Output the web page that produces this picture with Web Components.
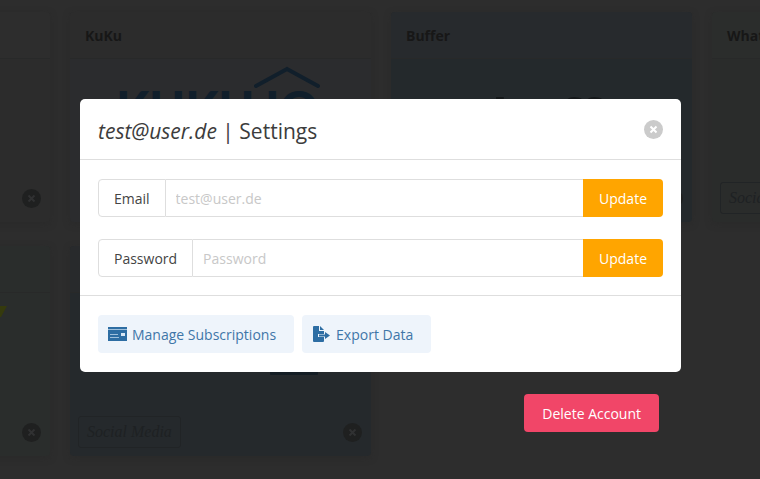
<!DOCTYPE html>
<html lang="en">
<head>
<meta charset="utf-8">
<title>Settings</title>
<style>
html, body { margin: 0; height: 100%; overflow: hidden; background: #2d2d2d; font-family: "Open Sans", "Noto Sans", sans-serif; font-size: 14px; color: #444; }
</style>
</head>
<body>
<app-shell>
  <card-board>
    <app-card style="--bg:#2c2c2c;--head:#2d2d2d"></app-card>
    <app-card name="KuKu" style="--bg:#2b2c2e;--head:#2c2c2c"><kuku-logo></kuku-logo></app-card>
    <app-card name="Buffer" style="--bg:#24292c;--head:#272a2d"><buffer-logo></buffer-logo></app-card>
    <app-card name="WhatsApp" tag="Social" style="--bg:#2a2c2b;--head:#2b2d2c"></app-card>
    <app-card style="--bg:#2a2d2c;--head:#2a2d2c"><leaf-logo></leaf-logo></app-card>
    <app-card tag="Social Media" style="--bg:#25292c;--head:#282a2c"><line-logo></line-logo></app-card>
  </card-board>
  <settings-dialog slot="overlay" user="test@user.de">
    <update-field label="Email" type="email" placeholder="test@user.de"></update-field>
    <update-field label="Password" type="password" placeholder="Password"></update-field>
    <action-button slot="actions" kind="soft">
      <svg slot="icon" width="19" height="16" viewBox="0 0 19 16" aria-hidden="true"><path fill="#2d6da3" d="M0 1h19v2H0zM0 4h19v11H0z"/><path fill="#9fc0dc" d="M0 3h19v1H0zM2 8h8v1H2zM2 11h9v1H2z"/><path fill="#d8e7f4" d="M13 7h4v3h-4z"/></svg>
      Manage Subscriptions
    </action-button>
    <action-button slot="actions" kind="soft">
      <svg slot="icon" width="19" height="16" viewBox="-1 0 19 16" aria-hidden="true"><path fill="#2d6da3" d="M1 0h5v5h5v3H5v3h6v4q0 1-1 1H1q-1 0-1-1V1q0-1 1-1zM7 0l4 4H7zM12 6l5 3.500-5 3.500v-2.500H6v-2h6z"/></svg>
      Export Data
    </action-button>
    <action-button slot="after" kind="danger">Delete Account</action-button>
  </settings-dialog>
</app-shell>
<script>
function define(name, render) {
  customElements.define(name, class extends HTMLElement {
    constructor() {
      super();
      this.attachShadow({ mode: "open" });
    }
    connectedCallback() {
      const t = document.createElement("template");
      t.innerHTML = render(this);
      this.shadowRoot.replaceChildren(t.content.cloneNode(true));
    }
  });
}

const closeIcon = (fill, cross) => `<svg width="19" height="19" viewBox="0 0 19 19" aria-hidden="true"><circle cx="9.5" cy="9.5" r="9.500" fill="${fill}"/><path d="M6.500 6.500l6 6M12.500 6.500l-6 6" stroke="${cross}" stroke-width="2"/></svg>`;

define("app-shell", () => `
<style>
:host { display: grid; height: 100vh; grid-template: minmax(0, 1fr) / minmax(0, 1fr); overflow: hidden; }
main, aside { grid-area: 1 / 1; min-width: 0; }
main { overflow: hidden; }
aside { z-index: 1; }
</style>
<main inert><slot></slot></main><aside><slot name="overlay"></slot></aside>`);

define("card-board", () => `
<style>
:host { display: grid; grid-template-columns: repeat(4, 301px); grid-auto-rows: 210px; gap: 24px 20px; margin: 12px 0 0 -251px; }
</style><slot></slot>`);

define("app-card", el => `
<style>
:host { display: flex; flex-direction: column; border-radius: 4px; background: var(--bg); box-shadow: 0 2px 6px #2a2a2a; overflow: hidden; color: #171717; }
header { height: 47px; box-sizing: border-box; padding: 1px 15px 0; display: flex; align-items: center; background: var(--head); border-bottom: 1px solid #282929; }
h2 { margin: 0; font-size: 14px; line-height: 20px; font-weight: 700; }
.art { flex: 1; min-height: 0; overflow: hidden; display: flex; flex-direction: column; align-items: center; }
footer { height: 48px; box-sizing: border-box; padding: 0 9px 0 8px; display: flex; align-items: center; justify-content: space-between; }
.tag { font: italic 16px/30px "Liberation Serif", serif; border: 1px solid #212426; padding: 0 8px; border-radius: 3px; color: #1e2123; }
button { margin-left: auto; border: 0; padding: 0; background: none; display: flex; }
</style>
<header><h2>${el.getAttribute("name") || ""}</h2></header>
<div class="art"><slot></slot></div>
<footer>${el.hasAttribute("tag") ? `<span class="tag">${el.getAttribute("tag")}</span>` : ""}<button aria-label="Remove">${closeIcon("#1f2020", "#303132")}</button></footer>`);

define("kuku-logo", () => `
<style>
:host { display: flex; flex-direction: column; width: 209px; color: #111f2b; }
svg { align-self: flex-end; margin: 7px 4px 0 0; }
b { font: 900 48px/48px Lato, sans-serif; margin-top: -6px; white-space: nowrap; }
</style>
<svg width="68" height="24" viewBox="0 0 68 24" aria-hidden="true"><path d="M3 20L34 3l31 17" fill="none" stroke="#111f2b" stroke-width="4" stroke-linecap="round"/></svg>
<b>KUKU.IO</b>`);

define("buffer-logo", () => `
<style>
:host { display: block; align-self: flex-start; margin: 28px 0 0 101px; font: 700 52px/60px "Open Sans", sans-serif; color: #15181a; }
</style>buffer`);

define("leaf-logo", () => `
<style>:host { display: block; align-self: flex-end; padding: 13px 43px 0 0; }</style>
<svg width="20" height="60" viewBox="0 0 20 60" aria-hidden="true"><path d="M0 0h20l-6 11H0z" fill="#353a0d"/></svg>`);

define("line-logo", () => `
<style>:host { display: block; align-self: flex-end; padding: 75px 53px 0 0; }</style>
<svg width="48" height="7" viewBox="0 7 48 7" overflow="visible" aria-hidden="true"><path d="M0 0h48v5q0 1-1 1H1q-1 0-1-1z" fill="#141d24"/></svg>`);

define("settings-dialog", el => `
<style>
:host { display: block; margin: 99px 79px 0 80px; }
section { background: #fff; border-radius: 5px; }
header { display: flex; align-items: center; justify-content: space-between; padding: 14px 18px; border-bottom: 1px solid #dedede; }
h1 { margin: 0; font-size: 21px; line-height: 28px; padding-top: 4px; font-weight: 400; color: #3c3c3c; }
header button { padding: 0; border: 0; background: none; display: flex; cursor: pointer; }
form { display: flex; flex-direction: column; gap: 22px; padding: 19px 18px 18px; }
footer { display: flex; gap: 8px; padding: 19px 18px; border-top: 1px solid #dedede; }
.after { display: flex; justify-content: flex-end; padding: 22px 22px 0; }
</style>
<section role="dialog" aria-labelledby="title">
  <header><h1 id="title"><em>${el.getAttribute("user")}</em> | Settings</h1><button aria-label="Close">${closeIcon("#cbcbcb", "#fff")}</button></header>
  <form><slot></slot></form>
  <footer><slot name="actions"></slot></footer>
</section>
<div class="after"><slot name="after"></slot></div>`);

define("update-field", el => `
<style>
:host { display: flex; height: 38px; }
label { display: flex; align-items: center; padding: 0 15px; border: 1px solid #dedede; border-radius: 4px 0 0 4px; color: #444; }
input { flex: 1; min-width: 0; box-sizing: border-box; padding: 0 10px; border: 1px solid #dedede; border-width: 1px 0; font: inherit; color: #444; background: #fff; outline: none; }
input::placeholder { color: #c8c8c8; opacity: 1; }
button { padding: 0 16px; border: 0; border-radius: 0 4px 4px 0; background: #ffa500; color: #fff; font: inherit; cursor: pointer; }
</style>
<label for="field">${el.getAttribute("label")}</label>
<input id="field" type="${el.getAttribute("type")}" placeholder="${el.getAttribute("placeholder")}">
<button type="button">Update</button>`);

define("action-button", el => `
<style>
:host { display: block; }
button { display: flex; align-items: center; gap: 5px; height: 38px; padding: 0 18px; border: 0; border-radius: 4px; font: inherit; white-space: nowrap; cursor: pointer; }
.soft { background: #eef4fb; color: #3f76a8; padding-left: 10px; }
.danger { background: #f14668; color: #fff; }
</style>
<button type="button" class="${el.getAttribute("kind")}"><slot name="icon"></slot><span><slot></slot></span></button>`);
</script>
</body>
</html>
